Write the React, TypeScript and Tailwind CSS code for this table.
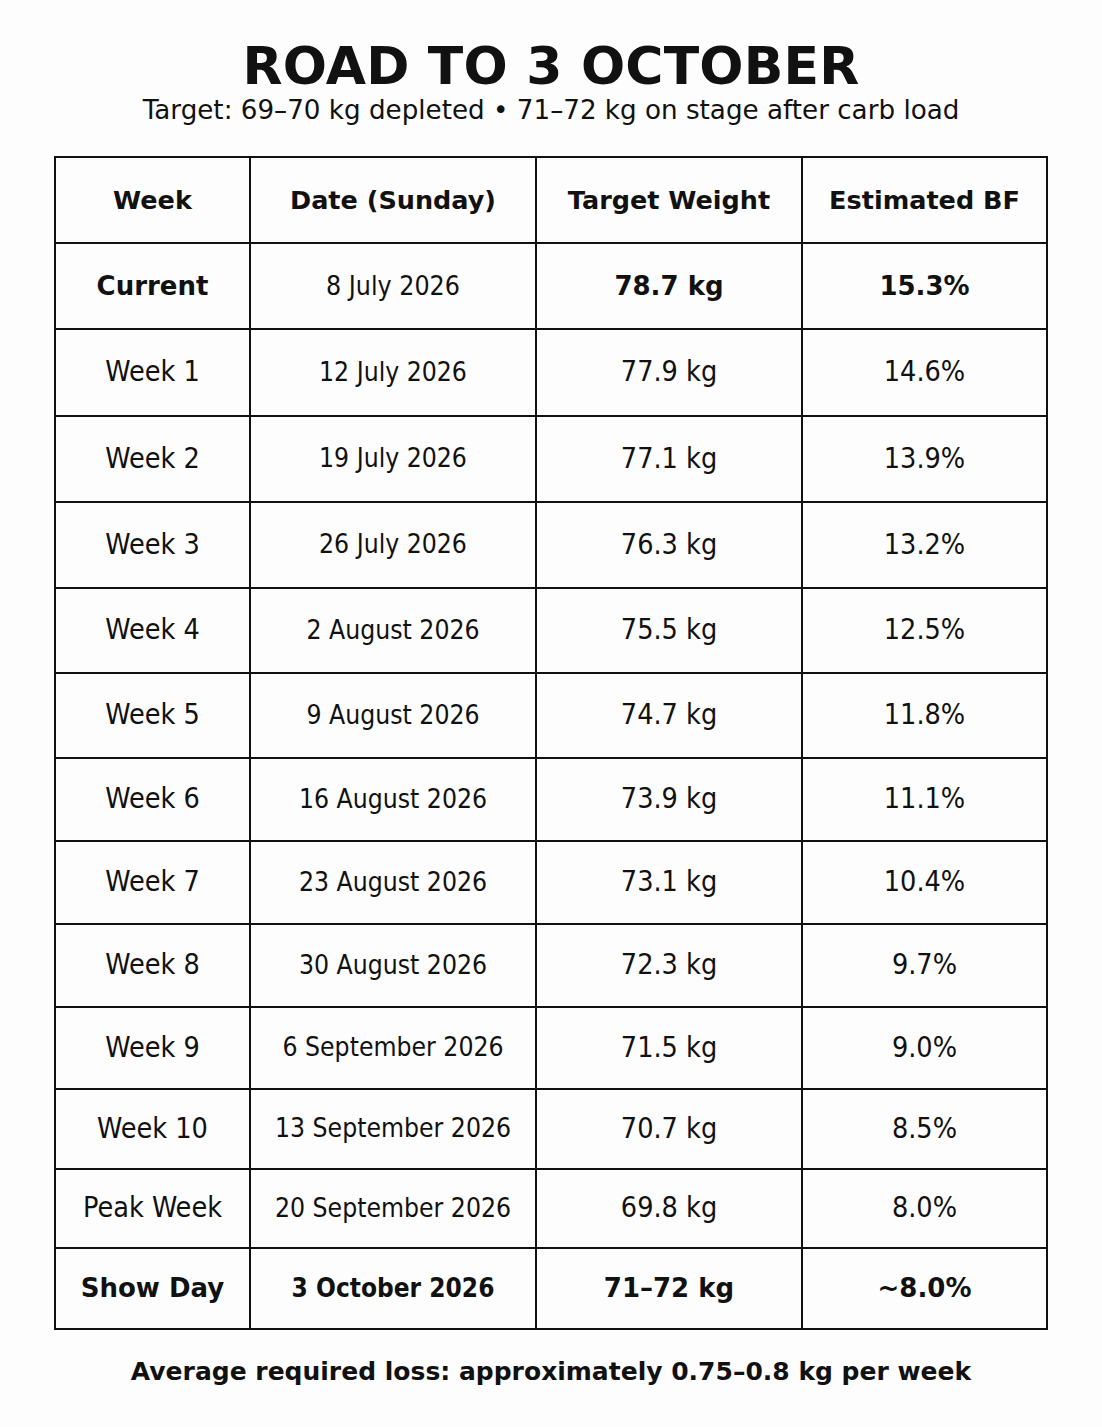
import React from "react";

type Row = {
  week: string;
  date: string;
  weight: string;
  bf: string;
  bold?: boolean;
  h: string;
};

const rows: Row[] = [
  { week: "Current", date: "8 July 2026", weight: "78.7 kg", bf: "15.3%", bold: true, h: "h-[86px]" },
  { week: "Week 1", date: "12 July 2026", weight: "77.9 kg", bf: "14.6%", h: "h-[87px]" },
  { week: "Week 2", date: "19 July 2026", weight: "77.1 kg", bf: "13.9%", h: "h-[86px]" },
  { week: "Week 3", date: "26 July 2026", weight: "76.3 kg", bf: "13.2%", h: "h-[86px]" },
  { week: "Week 4", date: "2 August 2026", weight: "75.5 kg", bf: "12.5%", h: "h-[85px]" },
  { week: "Week 5", date: "9 August 2026", weight: "74.7 kg", bf: "11.8%", h: "h-[85px]" },
  { week: "Week 6", date: "16 August 2026", weight: "73.9 kg", bf: "11.1%", h: "h-[83px]" },
  { week: "Week 7", date: "23 August 2026", weight: "73.1 kg", bf: "10.4%", h: "h-[83px]" },
  { week: "Week 8", date: "30 August 2026", weight: "72.3 kg", bf: "9.7%", h: "h-[83px]" },
  { week: "Week 9", date: "6 September 2026", weight: "71.5 kg", bf: "9.0%", h: "h-[82px]" },
  { week: "Week 10", date: "13 September 2026", weight: "70.7 kg", bf: "8.5%", h: "h-[80px]" },
  { week: "Peak Week", date: "20 September 2026", weight: "69.8 kg", bf: "8.0%", h: "h-[79px]" },
  { week: "Show Day", date: "3 October 2026", weight: "71–72 kg", bf: "~8.0%", bold: true, h: "h-[81px]" },
];

const cell = "border-2 border-[#111] text-center align-middle";
const condensed = "font-['DejaVu_Sans_Condensed','DejaVu_Sans',sans-serif]";

export default function App() {
  return (
    <div className="w-[1102px] h-[1427px] bg-[#fdfdfd] text-[#111] font-['DejaVu_Sans',sans-serif] flex flex-col items-center">
      {/* Title */}
      <h1 className="mt-[36px] text-[52px] leading-[60px] font-bold tracking-[0.2px]">ROAD TO 3 OCTOBER</h1>
      <p className="text-[26.2px] leading-[28px]">Target: 69–70 kg depleted • 71–72 kg on stage after carb load</p>

      {/* Table */}
      <table className="mt-[32px] w-[992px] table-fixed border-collapse">
        <colgroup>
          <col className="w-[195px]" />
          <col className="w-[286px]" />
          <col className="w-[266px]" />
          <col className="w-[245px]" />
        </colgroup>
        <thead>
          <tr className="h-[86px] text-[25.5px] font-bold">
            <th className={cell}>Week</th>
            <th className={cell}>Date (Sunday)</th>
            <th className={cell}>Target Weight</th>
            <th className={cell}>Estimated BF</th>
          </tr>
        </thead>
        <tbody>
          {rows.map((r) =>
            r.bold ? (
              <tr key={r.week} className={r.h + " font-bold text-[26px]"}>
                <td className={cell}>{r.week}</td>
                <td
                  className={
                    cell +
                    " " +
                    condensed +
                    (r.week === "Current" ? " text-[26.5px] font-normal" : " text-[26px] font-bold")
                  }
                >
                  {r.date}
                </td>
                <td className={cell}>{r.weight}</td>
                <td className={cell}>{r.bf}</td>
              </tr>
            ) : (
              <tr key={r.week} className={r.h + " text-[28.5px] font-normal " + condensed}>
                <td className={cell}>{r.week}</td>
                <td className={cell + " text-[26.3px]"}>{r.date}</td>
                <td className={cell}>{r.weight}</td>
                <td className={cell}>{r.bf}</td>
              </tr>
            )
          )}
        </tbody>
      </table>

      <p className="mt-[26px] text-[25px] leading-[32px] font-bold">
        Average required loss: approximately 0.75–0.8 kg per week
      </p>
    </div>
  );
}
